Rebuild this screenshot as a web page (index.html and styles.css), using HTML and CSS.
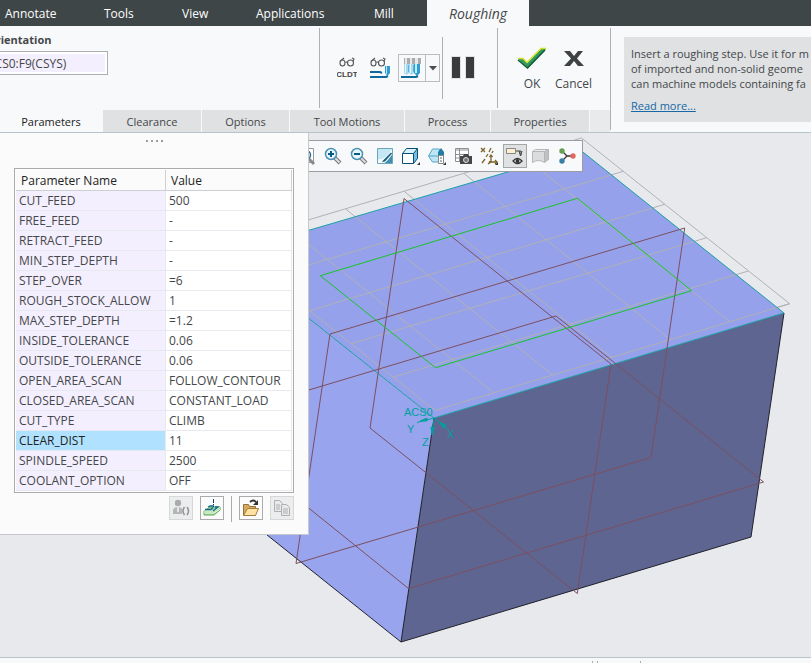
FILE: index.html
```html
<!DOCTYPE html>
<html lang="en">
<head>
<meta charset="utf-8">
<title>Roughing</title>
<link rel="stylesheet" href="styles.css">
</head>
<body>
<div class="app">
  <nav class="menu" aria-label="Ribbon tabs">
    <a href="#">Annotate</a>
    <a href="#">Tools</a>
    <a href="#">View</a>
    <a href="#">Applications</a>
    <a href="#">Mill</a>
    <a href="#" class="active">Roughing</a>
  </nav>

  <header class="ribbon">
    <div class="dashboard">
      <div class="groups">
        <form class="orientation">
          <label for="csys">Orientation</label>
          <input id="csys" type="text" value="ACS0:F9(CSYS)">
        </form>
        <div class="group display">
          <button class="plain" aria-label="CL data">
            <svg width="20" height="24" viewBox="0 0 20 24">
              <g fill="none" stroke="#55585a" stroke-width="1.1"><ellipse cx="5.500" cy="7" rx="2.500" ry="3"/><ellipse cx="13.500" cy="7" rx="3" ry="3"/><path d="M8.500 6.500q1-1 2 0M3 5.500L7 2M16 5.500L17 3 15 2"/></g>
              <text x="10" y="21" text-anchor="middle" class="cldt">CLDT</text>
            </svg>
          </button>
          <button class="plain" aria-label="Display tool path">
            <svg width="22" height="24" viewBox="0 0 22 24">
              <g fill="none" stroke="#55585a" stroke-width="1.1"><ellipse cx="4.500" cy="7" rx="2.500" ry="3"/><ellipse cx="12.500" cy="7" rx="3" ry="3"/><path d="M7.500 6.500q1-1 2 0M2 5.500L6 2M15 5.500L16 3 14 2"/></g>
              <path d="M1 16h10l2 1M1 21h16l2-1" fill="none" stroke="#11699c" stroke-width="2"/>
              <path d="M16 10h5v7l-2.500 3-2.500-3z" fill="#2f9bd0"/><path d="M17 10h1v8h-1z" fill="#b7e4f5"/>
            </svg>
          </button>
          <div class="split">
            <button aria-label="Tool display">
              <svg width="24" height="24" viewBox="0 0 24 24">
                <path d="M4 2h17v6H4z" fill="#a9abad"/><path d="M5 2h2v6H5zM10 2h2v6h-2zM15 2h3v6h-3z" fill="#e7e7e7"/>
                <path d="M4 8h5v9l-2.500 2L4 17zM9 8h5v9l-2.500 2L9 17z" fill="#a8d8ee"/>
                <path d="M14 8h6v9l-3 3-3-3z" fill="#2d9dd4"/><path d="M15 8h2v9h-2z" fill="#c2edfb"/><path d="M5 8h1v9H5zM10 8h1v9h-1z" fill="#e6f8fd"/><path d="M8 9h1v7H8zM13 9h1v7h-1z" fill="#5bb3dc"/>
                <path d="M1 21h15l2-1" fill="none" stroke="#11699c" stroke-width="2"/>
              </svg>
            </button>
            <button class="arrow" aria-label="More tool displays">
              <svg width="8" height="5" viewBox="0 0 8 5"><path d="M0 0h8L4 4.500z" fill="#4b4d4e"/></svg>
            </button>
          </div>
        </div>
        <div class="group pause">
          <button class="plain" aria-label="Pause">
            <svg width="24" height="24" viewBox="0 0 24 24"><path d="M0 0h10v23H0zM14 0h10v23H14z" fill="#e1e2e3"/><path d="M1 1h8v21H1zM15 1h8v21h-8z" fill="#3a3b3c"/></svg>
          </button>
        </div>
        <div class="group confirm">
          <button class="big">
            <svg width="30" height="24" viewBox="0 0 30 24"><path d="M1 12h5l4 4L24 2h5L11 21z" fill="#2e9a5e"/><path d="M1 11.500h5l4 4L24 1.500h5" fill="none" stroke="#d3e02c" stroke-width="1.500"/><path d="M1 13l9.500 8L28 3" fill="none" stroke="#145a34" stroke-width="1.500"/></svg>
            <span>OK</span>
          </button>
          <button class="big">
            <svg width="20" height="24" viewBox="0 0 20 24"><path d="M0 4h6l4 5 4-5h5l-6 7.500 7 7.500h-6l-4-5-4 5H0l7-7.500z" fill="#3f4243"/></svg>
            <span>Cancel</span>
          </button>
        </div>
      </div>
      <nav class="tabs" aria-label="Dashboard tabs">
        <a href="#" class="active">Parameters</a>
        <a href="#">Clearance</a>
        <a href="#">Options</a>
        <a href="#">Tool Motions</a>
        <a href="#">Process</a>
        <a href="#">Properties</a>
        <span class="filler"></span>
      </nav>
    </div>
    <aside class="help">
      <p>Insert a roughing step. Use it for m<br>of imported and non-solid geome<br>can machine models containing fa</p>
      <a href="#">Read more...</a>
    </aside>
  </header>

  <main class="canvas">
    <svg class="scene" viewBox="0 133 811 524" preserveAspectRatio="xMinYMin meet" role="img" aria-label="Workpiece model">
      <path class="grid" d="M226.500 244.500L581.500 138L789.700 303.700L435 410.500Z"/>
      <path fill="#96a1eb" d="M228 254L581 150.500L784 313L434 418Z"/>
      <path fill="#98a4ed" d="M228 254L434 418L401 642L202 483Z"/>
      <path fill="#5d6590" d="M434 418L784 313L751 537L401 642Z"/>
      <path class="grid" d="M226.500 244.500L435 410.500L789.700 303.700M623.300 171.300L268 277M664.700 204.300L310 310.500M706.700 237.700L351.700 343.500M748.300 271L393.300 377M287 227L493.500 392.700M346 209.300L552.700 375M404.300 191.500L611.500 357M464 173.500L669.500 339M523 155.700L730 321.700"/>
      <path class="edge" d="M434 418L401 642L202 483M401 642L751 537L784 313"/>
      <path class="teal" d="M228 254L581 150.500L784 313L434 418Z"/>
      <path class="datum" d="M404 198.500L370 428L577.300 593.500L611 364ZM330 334L684.700 228L651 457.500L296 563.500ZM556 316L763.500 482L408.500 588.500L202 422Z"/>
      <path class="cut" d="M320.300 275.700L577.300 198.300L691.700 290.700L435.500 367.700Z"/>
      <g class="csys">
        <path d="M434 418L417 422.500M434 418L432.500 434M434 418L448 429"/>
        <path d="M420 421l7-3v3zM431 427h3l-2 8zM439 422l7 3-2 3z" fill="#00a0a0"/>
        <text x="404" y="416">ACS0</text><text x="407" y="433">Y</text><text x="422" y="446">Z</text><text x="447" y="438">X</text>
      </g>
    </svg>

    <div class="view-toolbar" role="toolbar" aria-label="View tools">
      <button aria-label="Refit"><svg viewBox="0 0 20 20"><path d="M1.500 2.500h15v14h-15z" fill="#fff" stroke="#96999b"/><circle cx="9" cy="9" r="4.500" fill="#e9f7fc" stroke="#226f94" stroke-width="1.500"/><path d="M12 13l5 5" stroke="#888b8d" stroke-width="3"/></svg></button>
      <button aria-label="Zoom in"><svg viewBox="0 0 20 20"><path d="M11 11l6 6" stroke="#77797b" stroke-width="4"/><path d="M12 12l4.500 4.500" stroke="#dcdddd" stroke-width="2"/><circle cx="8" cy="8" r="5.500" fill="#e7f7fd" stroke="#4c91b1" stroke-width="1.500"/><path d="M5 8h6M8 5v6" stroke="#075c85" stroke-width="2"/></svg></button>
      <button aria-label="Zoom out"><svg viewBox="0 0 20 20"><path d="M11 11l6 6" stroke="#77797b" stroke-width="4"/><path d="M12 12l4.500 4.500" stroke="#dcdddd" stroke-width="2"/><circle cx="8" cy="8" r="5.500" fill="#e7f7fd" stroke="#4c91b1" stroke-width="1.500"/><path d="M5 8h6" stroke="#075c85" stroke-width="2"/></svg></button>
      <button aria-label="Repaint"><svg viewBox="0 0 20 20"><path d="M2.500 2.500h15v15h-15z" fill="#c4e7f4" stroke="#6fa3b9"/><path d="M17 9v8h-7q4-4 7-8z" fill="#3d8fb2"/><path d="M3 13.500q8 0 13-9h1v2q-3 8-8 10.500H3z" fill="#f5fbfd"/><path d="M8 14.500l8-8 1 1-7 8-3 .5z" fill="#1d5f7e"/></svg></button>
      <button aria-label="Display style"><svg viewBox="0 0 20 20"><path d="M1.500 7.500h11v10h-11z" fill="#fff"/><path d="M1.500 7.500l4-5h11l-4 5z" fill="#d8f1fa"/><path d="M12.500 7.500l4-5v10l-4 5z" fill="#75bfdc"/><path d="M1.500 7.500h11v10h-11zl4-5h11l-4 5m4-5v10l-4 5" fill="none" stroke="#075073"/><path d="M19 16v3h-3z" fill="#333"/></svg></button>
      <button aria-label="Saved orientations"><svg viewBox="0 0 20 20"><path d="M1.500 10l4-7h7l3 7-3 6h-7z" fill="#bce6f4" stroke="#5ba5c3"/><path d="M2 10h12" stroke="#5ba5c3"/><path d="M11 10V6l3-4 3 4v4z" fill="#227da5"/><path d="M11.500 9.500h5v8h-5z" fill="#fff" stroke="#85888a"/><path d="M13 12h2M13 15h2" stroke="#666"/><path d="M19 16v3h-3z" fill="#333"/></svg></button>
      <button aria-label="View manager"><svg viewBox="0 0 20 20"><path d="M2.500 2.500h13v13h-13z" fill="#fff" stroke="#8d9092"/><path d="M3 4h12M3 8.500h12M3 12h12M6.500 3v12" stroke="#8d9092"/><path d="M7 10h3l1-2h4l1 2h3v8H7z" fill="#444648"/><circle cx="13" cy="14" r="2.500" fill="#777" stroke="#ddd"/></svg></button>
      <button aria-label="Datum display"><svg viewBox="0 0 20 20"><g fill="none" stroke="#7b6325" stroke-width="1.300"><path d="M2 2l4 4M6 2L2 6M3 17l3-4M7 11l2-3M10 6l2-4M10 17l1-2M13 7l1-2M12 9v7h6M12 16l-3 2"/><path d="M10.500 11l1.500-2 1.500 2M16 14l2 2-2 2"/></g><path d="M19 16v3h-3z" fill="#333"/></svg></button>
      <button class="pressed" aria-label="Annotation display"><svg viewBox="0 0 20 20"><path d="M1.500 2.500h9v5h-9z" fill="#fff1cd" stroke="#85888a"/><path d="M11 5h5v4M14 5l1.500 5L17 5" fill="none" stroke="#444"/><path d="M8 15q4.500-5 9 0-4.500 5-9 0z" fill="#fff" stroke="#333" stroke-width="1.300"/><circle cx="12.500" cy="15" r="2" fill="#333"/></svg></button>
      <button aria-label="Section view"><svg viewBox="0 0 20 20"><path d="M1.500 5.500l3-2h13l-3 2z" fill="#eee" stroke="#b4b6b8"/><path d="M1.500 5.500h12v11q-6-4-12 0z" fill="#dadcdd" stroke="#b4b6b8"/><path d="M13.500 5.500l4-2v10l-4 3z" fill="#bfc1c3" stroke="#b4b6b8"/></svg></button>
      <button aria-label="Spin center"><svg viewBox="0 0 20 20"><path d="M5 5l5 5-5 5M10 10h6" fill="none" stroke="#333" stroke-width="1.300"/><circle cx="5" cy="5" r="2.700" fill="#67a052"/><circle cx="16" cy="10" r="2.700" fill="#e06861"/><circle cx="5" cy="15" r="2.700" fill="#387fa5"/></svg></button>
    </div>

    <section class="panel" aria-label="Parameters">
      <div class="grip"><i></i><i></i><i></i><i></i></div>
      <div class="table-frame">
        <table>
          <thead><tr><th scope="col">Parameter Name</th><th scope="col">Value</th></tr></thead>
          <tbody>
            <tr><td>CUT_FEED</td><td>500</td></tr>
            <tr><td>FREE_FEED</td><td>-</td></tr>
            <tr><td>RETRACT_FEED</td><td>-</td></tr>
            <tr><td>MIN_STEP_DEPTH</td><td>-</td></tr>
            <tr><td>STEP_OVER</td><td>=6</td></tr>
            <tr><td>ROUGH_STOCK_ALLOW</td><td>1</td></tr>
            <tr><td>MAX_STEP_DEPTH</td><td>=1.2</td></tr>
            <tr><td>INSIDE_TOLERANCE</td><td>0.06</td></tr>
            <tr><td>OUTSIDE_TOLERANCE</td><td>0.06</td></tr>
            <tr><td>OPEN_AREA_SCAN</td><td>FOLLOW_CONTOUR</td></tr>
            <tr><td>CLOSED_AREA_SCAN</td><td>CONSTANT_LOAD</td></tr>
            <tr><td>CUT_TYPE</td><td>CLIMB</td></tr>
            <tr class="selected"><td>CLEAR_DIST</td><td>11</td></tr>
            <tr><td>SPINDLE_SPEED</td><td>2500</td></tr>
            <tr><td>COOLANT_OPTION</td><td>OFF</td></tr>
          </tbody>
        </table>
      </div>
      <div class="actions">
        <button disabled aria-label="Relations"><svg viewBox="0 0 18 18"><circle cx="6" cy="4" r="3.200" fill="#a9abad"/><path d="M1 15v-4q1-3 5-3t4 3v4z" fill="#b4b6b8"/><path d="M5 8h2v5H5z" fill="#e4e5e6"/><path d="M12.500 8q-3 4 0 8M15 8q3 4 0 8" fill="none" stroke="#8f9193" stroke-width="1.500"/></svg></button>
        <button aria-label="Edit machining parameters"><svg viewBox="0 0 18 18"><path d="M1 12l6-4h10v3l-6 5H1z" fill="#a9dba0" stroke="#5ea857"/><path d="M1 12h10l6-4M1 14h10l6-4" fill="none" stroke="#e8f8e2"/><path d="M2 10.500h6l2-2M5 8l2-1h4M10 12l5-4h-3" fill="none" stroke="#12688f" stroke-width="1.300"/><path d="M10.500 0v8" stroke="#123f5f" stroke-dasharray="4 1 1 1"/></svg></button>
        <span class="divider"></span>
        <button aria-label="Open parameters file"><svg viewBox="0 0 18 18"><path d="M1.500 16V5.500h5l1 2h6V16z" fill="#d8a95b" stroke="#93723b"/><path d="M1.500 16.500l4-7h11l-3 7z" fill="#ffe1a0" stroke="#a07b3d"/><path d="M8 3q3-3 6 0" fill="none" stroke="#333" stroke-width="1.800"/><path d="M16 1v5h-5z" fill="#333"/></svg></button>
        <button disabled aria-label="Copy parameters"><svg viewBox="0 0 18 18"><g fill="#e8e9ea" stroke="#aeb0b2"><path d="M1.500 1.500h5l3 3v8h-8z"/><path d="M8.500 5.500h5l3 3v8h-8z"/><path d="M3 6h4M3 8h4M3 10h4M10 10h5M10 12h5M10 14h5"/></g></svg></button>
      </div>
    </section>
  </main>
  <footer class="status"><i></i><i></i><i></i></footer>
</div>
</body>
</html>
```
FILE: styles.css
```css
* { box-sizing: border-box; }
body {
  margin: 0;
  font: 12px/16px "Open Sans", "Noto Sans", sans-serif;
  color: #444749;
  background: #f8f9fb;
}
button, input { font: inherit; color: inherit; }
button { padding: 0; border: 0; background: none; }
svg { display: block; }
.app {
  display: grid;
  grid-template-rows: 26px 107px 1fr 6px;
  height: 100vh;
  overflow: hidden;
}

/* Ribbon tabs */
.menu {
  display: grid;
  grid-template-columns: 99px 78px 74px 118px 58px 102px;
  background: #3e4648;
}
.menu a { padding: 6px 5px 4px; color: #fff; text-decoration: none; }
.menu .active {
  padding: 6px 0 4px;
  background: #f8f9fb;
  color: #444749;
  font-size: 14px;
  font-style: italic;
  text-align: center;
}

/* Ribbon */
.ribbon {
  display: flex;
  border-bottom: 1px solid #b5c5c8;
  overflow: hidden;
}
.dashboard { display: flex; flex-direction: column; flex: none; width: 610px; }
.groups { display: flex; flex: 1; }
.orientation { width: 335px; margin: 6px 0 0 -16px; }
.orientation label { display: block; height: 19px; padding-left: 3px; font-size: 11px; font-weight: bold; }
.orientation input {
  width: 124px;
  height: 24px;
  padding: 0 2px;
  border: 1px solid #acaeb0;
  background: #f4effe;
  box-shadow: inset 0 0 0 2px #fff;
}
.group { display: flex; align-items: center; }
.display {
  gap: 12px;
  width: 123px;
  height: 80px;
  margin-top: 2px;
  padding-left: 17px;
  border-left: 1px solid #aeb0b3;
}
.cldt { font: bold 8px "Liberation Sans", sans-serif; fill: #444; }
.split { display: flex; flex: none; width: 42px; height: 28px; margin-left: -5px; border: 1px solid #bbbec1; }
.split button { display: grid; place-items: center; flex: 1; }
.split .arrow { flex: none; width: 14px; border-left: 1px solid #bbbec1; }
.pause { width: 55px; height: 62px; margin-top: 11px; padding-left: 8px; border-left: 1px solid #aeb0b3; }
.confirm {
  gap: 8px;
  flex: 1;
  height: 80px;
  margin-top: 2px;
  padding: 3px 0 0 19px;
  border-left: 1px solid #aeb0b3;
}
.big { display: flex; flex-direction: column; align-items: center; gap: 5px; }

/* Dashboard tabs */
.tabs {
  display: grid;
  grid-template-columns: 103px 99px 88px 115px 86px 99px 1fr;
  height: 22px;
  font-size: 11px;
}
.tabs a {
  padding: 4px 0;
  border-right: 1px solid #f8f9fb;
  background: #dfe1e3;
  color: #444749;
  text-align: center;
  text-decoration: none;
}
.tabs .active { background: #f8f9fb; color: #222; }
.filler { background: #e8eaec; }
.help {
  flex: 1;
  min-width: 0;
  margin: 2px 0;
  padding: 9px 0 8px 13px;
  border-left: 1px solid #aeb0b3;
  font-size: 11px;
  white-space: nowrap;
  overflow: hidden;
  background: #dfe1e3 content-box;
}
.help p { margin: 0; padding: 9px 0 0 7px; line-height: 15px; }
.help a { display: inline-block; margin: 7px 0 0 7px; color: #1668a6; }

/* Graphics area */
.canvas { position: relative; background: #e8e9ed; overflow: hidden; }
.scene { width: 100%; height: 100%; }
.scene path { stroke-width: 1; }
.grid { fill: none; stroke: #b0b1b5; }
.edge { fill: none; stroke: #20222c; }
.teal { fill: none; stroke: #1ba0a6; }
.datum { fill: none; stroke: #7c4f60; }
.cut { fill: none; stroke: #18c32b; }
.csys { fill: #00a0a0; stroke: none; font: 11px "Liberation Sans", sans-serif; }
.csys path { stroke: #00a0a0; }
.view-toolbar {
  position: absolute;
  top: 7px;
  left: 291px;
  display: flex;
  gap: 2px;
  padding: 3px;
  border: 1px solid #9b9da0;
  background: #f8f9fb;
}
.view-toolbar button { display: grid; place-items: center; width: 24px; height: 24px; }
.view-toolbar svg { width: 20px; height: 20px; }
.view-toolbar .pressed { border: 1px solid #a4a6a8; background: #dfe1e3; }

/* Parameters panel */
.panel {
  position: absolute;
  top: 0;
  left: 0;
  width: 309px;
  padding: 7px 14px 12px;
  border: solid #c6c8cc;
  border-width: 0 1px 1px 0;
  background: #fbfbfb;
}
.grip { display: flex; justify-content: center; gap: 3px; height: 28px; }
.grip i { width: 2px; height: 2px; background: #999b9d; }
.table-frame { padding: 1px; border: 1px solid #a9abad; background: #fff; }
table { width: 100%; table-layout: fixed; border-collapse: separate; border-spacing: 0; }
th, td {
  height: 20px;
  padding: 0 3px;
  border: solid #e6eaee;
  border-width: 0 1px 1px 0;
  line-height: 19px;
  text-align: left;
}
th { height: 21px; padding: 0 5px; border-color: #cdd0d2; background: #fbfbfb; color: #222; font-weight: normal; }
th:first-child { width: 150px; }
td:first-child { background: #f4effe; }
.selected td:first-child { background: #b0e2ff; color: #222; }
.actions { display: flex; justify-content: flex-end; gap: 7px; margin-top: 3px; }
.actions button { display: grid; place-items: center; width: 24px; height: 24px; border: 1px solid #a9abad; }
.actions button:disabled { border-color: #d5d7d9; background: #ecedee; }
.actions svg { width: 18px; height: 18px; }
.divider { width: 1px; height: 26px; background: #a9abad; }

/* Status bar */
.status { display: flex; align-items: flex-end; gap: 4px; padding-left: 592px; border-top: 1px solid #b5c5c8; background: #f7f9f9; }
.status i { width: 1px; height: 2px; background: #a9abad; }
.status i:last-child { margin-left: 38px; }
```
